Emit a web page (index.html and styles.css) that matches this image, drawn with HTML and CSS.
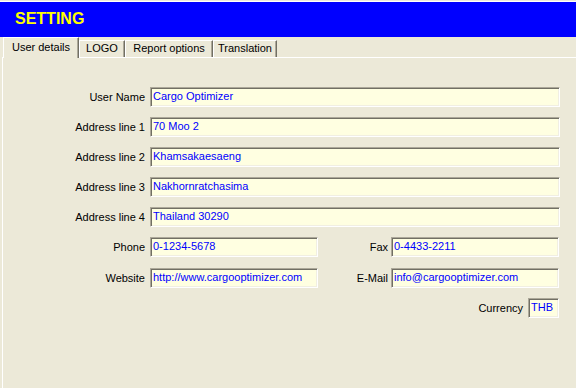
FILE: index.html
```html
<!DOCTYPE html>
<html>
<head>
<meta charset="utf-8">
<title>Setting</title>
<link rel="stylesheet" href="styles.css">
</head>
<body>
<div class="window">
  <div class="titlebar">SETTING</div>
  <div class="tabs">
    <div class="tab tab-active tab-user">User details</div>
    <div class="tab tab-logo">LOGO</div>
    <div class="tab tab-report">Report options</div>
    <div class="tab tab-trans">Translation</div>
  </div>
  <div class="panel">
    <div class="row"><span class="lbl">User Name</span><div class="field wide">Cargo Optimizer</div></div>
    <div class="row"><span class="lbl">Address line 1</span><div class="field wide">70 Moo 2</div></div>
    <div class="row"><span class="lbl">Address line 2</span><div class="field wide">Khamsakaesaeng</div></div>
    <div class="row"><span class="lbl">Address line 3</span><div class="field wide">Nakhornratchasima</div></div>
    <div class="row"><span class="lbl">Address line 4</span><div class="field wide">Thailand 30290</div></div>
    <div class="row row-phone"><span class="lbl">Phone</span><div class="field half">0-1234-5678</div><span class="lbl lbl-mid">Fax</span><div class="field half">0-4433-2211</div></div>
    <div class="row"><span class="lbl">Website</span><div class="field half">http://www.cargooptimizer.com</div><span class="lbl lbl-mid">E-Mail</span><div class="field half">info@cargooptimizer.com</div></div>
    <div class="row row-currency"><span class="lbl lbl-cur">Currency</span><div class="field cur">THB</div></div>
  </div>
</div>
</body>
</html>
```

FILE: styles.css
```css
html, body {
  margin: 0;
  padding: 0;
}
body {
  background: #ece9d8;
  font-family: "Liberation Sans", Arial, sans-serif;
  font-size: 11px;
  color: #000;
  width: 576px;
  height: 388px;
  overflow: hidden;
}
.window {
  padding-top: 1px;
  height: 387px;
  display: flex;
  flex-direction: column;
}
.titlebar {
  border-top: 1px solid #fff;
  background: #0000ff;
  color: #ffff00;
  font-weight: bold;
  font-size: 16px;
  height: 35px;
  line-height: 33px;
  padding-left: 15px;
}
.tabs {
  display: flex;
  align-items: flex-end;
  height: 20px;
  padding-left: 3px;
  position: relative;
  z-index: 1;
}
.tab {
  box-sizing: border-box;
  height: 17px;
  border-top: 1px solid #fff;
  border-left: 1px solid #fff;
  border-right: 1px solid #716f64;
  box-shadow: inset -1px 0 #aca899;
  background: #ece9d8;
  text-align: center;
  line-height: 15px;
  white-space: nowrap;
}
.tab-active {
  height: 21px;
  margin-bottom: -1px;
  line-height: 19px;
}
.tab-user { width: 76px; }
.tab-logo { width: 46px; }
.tab-report { width: 88px; }
.tab-trans { width: 64px; }
.panel {
  flex: 1;
  margin-left: 2px;
  border-left: 1px solid #fff;
  border-top: 1px solid #fff;
  padding-top: 29px;
}
.row {
  display: flex;
  align-items: center;
  height: 20px;
  margin-bottom: 10px;
}
.row-phone {
  margin-bottom: 11px;
}
.row-currency {
  margin-top: 4px;
  justify-content: flex-end;
  padding-right: 17px;
}
.lbl {
  width: 142px;
  margin-right: 5px;
  text-align: right;
  white-space: nowrap;
}
.lbl-mid {
  width: 70px;
  margin-right: 3px;
}
.lbl-cur {
  width: auto;
}
.field {
  box-sizing: border-box;
  height: 20px;
  background: #ffffe1;
  color: #0000ff;
  border: 1px solid;
  border-color: #aca899 #fff #fff #aca899;
  box-shadow: inset 1px 1px #716f64, inset -1px -1px #f1efe2;
  padding: 0 2px;
  line-height: 17px;
  white-space: nowrap;
  overflow: hidden;
}
.wide { width: 410px; }
.half { width: 168px; }
.cur { width: 31px; }
```
